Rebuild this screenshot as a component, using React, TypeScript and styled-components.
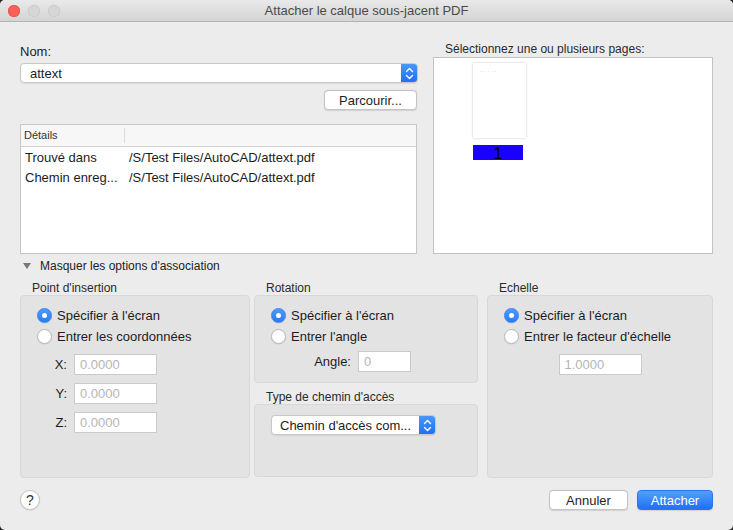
import React from "react";
import styled, { createGlobalStyle } from "styled-components";

const GlobalStyle = createGlobalStyle`
  html, body {
    margin: 0;
    padding: 0;
    background: #262626;
  }
  body {
    font-family: "Liberation Sans", Arial, sans-serif;
    font-size: 13px;
    color: #222;
  }
`;

const Window = styled.div`
  width: 733px;
  height: 530px;
  background: #ececec;
  border-radius: 5px;
  overflow: hidden;
  display: flex;
  flex-direction: column;
`;

const TitleBar = styled.div`
  height: 21px;
  border-bottom: 1px solid #b4b4b4;
  background: linear-gradient(#e9e9e9, #d4d4d4);
  display: grid;
  grid-template-columns: 1fr auto 1fr;
  align-items: center;
`;

const Lights = styled.div`
  display: flex;
  gap: 8px;
  padding-left: 8px;
`;

const Light = styled.span<{ $color: string; $border: string }>`
  width: 12px;
  height: 12px;
  border-radius: 50%;
  background: ${({ $color }) => $color};
  box-shadow: inset 0 0 0 0.5px ${({ $border }) => $border};
`;

const Title = styled.div`
  font-size: 13px;
  color: #4a4a4a;
`;

const Content = styled.div`
  padding: 0 20px;
  display: flex;
  flex-direction: column;
`;

const TopSection = styled.div`
  display: grid;
  grid-template-columns: 398px 1fr;
  column-gap: 15px;
`;

const LeftCol = styled.div`
  display: flex;
  flex-direction: column;
`;

const FieldLabel = styled.div`
  margin-top: 22px;
  line-height: 16px;
  color: #222;
`;

const Combo = styled.div`
  margin-top: 3px;
  height: 20px;
  box-sizing: border-box;
  background: #fff;
  border: 1px solid #c9c9c9;
  border-radius: 4px;
  box-shadow: 0 0.5px 1px rgba(0, 0, 0, 0.08);
  display: flex;
  align-items: center;
  overflow: hidden;
`;

const ComboText = styled.span`
  flex: 1;
  padding-left: 9px;
  color: #1c1c1c;
`;

const Stepper = styled.span`
  width: 17px;
  height: 20px;
  margin: -1px -1px -1px 0;
  background: linear-gradient(#4d98fb, #1c6ff5);
  border-radius: 0 4px 4px 0;
  display: flex;
  align-items: center;
  justify-content: center;
`;

const BrowseRow = styled.div`
  margin-top: 7px;
  display: flex;
  justify-content: flex-end;
  padding-right: 1px;
`;

const Button = styled.button<{ $width: number; $primary?: boolean }>`
  width: ${({ $width }) => $width}px;
  height: 20px;
  box-sizing: border-box;
  padding: 0;
  font-family: inherit;
  font-size: 13px;
  border-radius: 4px;
  border: 1px solid ${({ $primary }) => ($primary ? "#2a76f0" : "#c4c4c4")};
  background: ${({ $primary }) =>
    $primary ? "linear-gradient(#53a0fc, #1f70f5)" : "#fff"};
  color: ${({ $primary }) => ($primary ? "#fff" : "#1e1e1e")};
  box-shadow: 0 0.5px 1px rgba(0, 0, 0, 0.12);
`;

const Table = styled.div`
  margin-top: 14px;
  width: 397px;
  height: 130px;
  box-sizing: border-box;
  background: #fff;
  border: 1px solid #c6c6c6;
  display: flex;
  flex-direction: column;
`;

const TableHeader = styled.div`
  height: 21px;
  border-bottom: 1px solid #d3d3d3;
  background: #f7f7f7;
  display: flex;
  align-items: center;
  font-size: 11px;
  color: #333;
`;

const HeaderCell = styled.div`
  width: 100px;
  padding-left: 3px;
  height: 15px;
  line-height: 15px;
  border-right: 1px solid #dcdcdc;
`;

const TableBody = styled.div`
  padding-top: 1px;
`;

const TableRow = styled.div`
  display: grid;
  grid-template-columns: 104px 1fr;
  height: 19.5px;
  align-items: center;
  color: #1c1c1c;
`;

const Cell = styled.span`
  padding-left: 4px;
  white-space: nowrap;
`;

const RightCol = styled.div`
  display: flex;
  flex-direction: column;
`;

const PagesLabel = styled.div`
  margin-top: 20px;
  line-height: 15px;
  padding-left: 12px;
  font-size: 12px;
  color: #2a2a2a;
`;

const PagesBox = styled.div`
  height: 197px;
  box-sizing: border-box;
  background: #fff;
  border: 1px solid #c3c3c3;
  padding: 5px 0 0 39px;
`;

const PageItem = styled.div`
  display: flex;
  flex-direction: column;
  gap: 7px;
  width: 53px;
`;

const Thumb = styled.div`
  width: 53px;
  height: 75px;
  background: #fff;
  box-shadow: 0 0 2px rgba(0, 0, 0, 0.25);
  box-sizing: border-box;
  padding: 5px 0 0 7px;
  font-size: 6px;
  line-height: 6px;
  color: #b8b8b8;
  letter-spacing: 0.5px;
`;

const PageNumber = styled.div`
  width: 50px;
  height: 15px;
  background: #1a00ff;
  color: #000;
  font-size: 16px;
  line-height: 18px;
  text-align: center;
`;

const Disclosure = styled.div`
  margin-top: 5px;
  height: 14px;
  display: flex;
  align-items: center;
  gap: 9px;
  padding-left: 3px;
  font-size: 12px;
  color: #222;
`;

const Triangle = styled.span`
  width: 0;
  height: 0;
  border-left: 4px solid transparent;
  border-right: 4px solid transparent;
  border-top: 6px solid #777;
`;

const Options = styled.div`
  margin-top: 9px;
  display: grid;
  grid-template-columns: 230px 229px 226px;
  column-gap: 4px;
`;

const Column = styled.div`
  display: flex;
  flex-direction: column;
`;

const GroupTitle = styled.div<{ $gap?: number }>`
  margin-top: ${({ $gap }) => $gap ?? 0}px;
  padding-left: 12px;
  font-size: 12px;
  line-height: 13px;
  color: #2a2a2a;
`;

const GroupBox = styled.div<{ $height: number; $width?: number }>`
  height: ${({ $height }) => $height}px;
  width: ${({ $width }) => ($width ? `${$width}px` : "auto")};
  box-sizing: border-box;
  background: #e3e3e3;
  border: 1px solid #d8d8d8;
  border-radius: 4px;
  padding: 9px 16px 0;
  display: flex;
  flex-direction: column;
`;

const RadioRow = styled.label`
  height: 21px;
  display: flex;
  align-items: center;
  gap: 5px;
  color: #1c1c1c;
`;

const Radio = styled.span<{ $checked?: boolean }>`
  width: 15px;
  height: 15px;
  box-sizing: border-box;
  border-radius: 50%;
  background: ${({ $checked }) =>
    $checked ? "linear-gradient(#4f9bfb, #2a7af6)" : "#fff"};
  border: 1px solid ${({ $checked }) => ($checked ? "#3a83f3" : "#b8b8b8")};
  box-shadow: 0 0.5px 1px rgba(0, 0, 0, 0.1);
  display: flex;
  align-items: center;
  justify-content: center;
  &::after {
    content: "";
    width: 5px;
    height: 5px;
    border-radius: 50%;
    background: ${({ $checked }) => ($checked ? "#fff" : "transparent")};
  }
`;

const CoordGrid = styled.div`
  margin: 7px 0 0 10px;
  display: grid;
  grid-template-columns: 20px 83px;
  column-gap: 7px;
  row-gap: 8px;
  align-items: center;
`;

const InlineLabel = styled.span<{ $width?: number }>`
  width: ${({ $width }) => ($width ? `${$width}px` : "auto")};
  text-align: right;
  color: #1c1c1c;
`;

const NumberField = styled.div<{ $width: number }>`
  width: ${({ $width }) => $width}px;
  height: 21px;
  box-sizing: border-box;
  background: #fff;
  border: 1px solid #cacaca;
  padding-left: 5px;
  line-height: 19px;
  color: #b5b5b5;
`;

const AngleRow = styled.div`
  margin: 4px 0 0 42px;
  display: flex;
  align-items: center;
  gap: 7px;
`;

const ScaleRow = styled.div`
  margin-top: 7px;
  display: flex;
  justify-content: center;
`;

const SelectBox = styled.div`
  margin-top: 1px;
  width: 165px;
  height: 20px;
  box-sizing: border-box;
  background: #fff;
  border: 1px solid #c9c9c9;
  border-radius: 4px;
  box-shadow: 0 0.5px 1px rgba(0, 0, 0, 0.08);
  display: flex;
  align-items: center;
  overflow: hidden;
`;

const SelectText = styled.span`
  flex: 1;
  padding-left: 8px;
  white-space: nowrap;
  color: #1c1c1c;
`;

const Footer = styled.div`
  margin-top: 12px;
  display: flex;
  justify-content: space-between;
  align-items: center;
`;

const HelpButton = styled.button`
  width: 20px;
  height: 20px;
  padding: 0;
  border-radius: 50%;
  border: 1px solid #c6c6c6;
  background: #fff;
  box-shadow: 0 0.5px 1px rgba(0, 0, 0, 0.15);
  font-family: inherit;
  font-size: 14px;
  color: #333;
  line-height: 18px;
`;

const Actions = styled.div`
  display: flex;
  gap: 9px;
`;

const StepperIcon = () => (
  <svg width="9" height="13" viewBox="0 0 9 13" fill="none">
    <path d="M1.5 4.5 L4.5 1.5 L7.5 4.5" stroke="#fff" strokeWidth="1.4" strokeLinecap="round" strokeLinejoin="round" />
    <path d="M1.5 8.5 L4.5 11.5 L7.5 8.5" stroke="#fff" strokeWidth="1.4" strokeLinecap="round" strokeLinejoin="round" />
  </svg>
);

const details = [
  { key: "Trouvé dans", value: "/S/Test Files/AutoCAD/attext.pdf" },
  { key: "Chemin enreg...", value: "/S/Test Files/AutoCAD/attext.pdf" },
];

const App = () => {
  return (
    <>
      <GlobalStyle />
      <Window>
        <TitleBar>
          <Lights>
            <Light $color="#fc5f57" $border="#e0443e" />
            <Light $color="#d6d6d6" $border="#c2c2c2" />
            <Light $color="#d6d6d6" $border="#c2c2c2" />
          </Lights>
          <Title>Attacher le calque sous-jacent PDF</Title>
          <span />
        </TitleBar>
        <Content>
          <TopSection>
            <LeftCol>
              <FieldLabel>Nom:</FieldLabel>
              <Combo>
                <ComboText>attext</ComboText>
                <Stepper>
                  <StepperIcon />
                </Stepper>
              </Combo>
              <BrowseRow>
                <Button $width={93}>Parcourir...</Button>
              </BrowseRow>
              <Table>
                <TableHeader>
                  <HeaderCell>Détails</HeaderCell>
                </TableHeader>
                <TableBody>
                  {details.map((d) => (
                    <TableRow key={d.key}>
                      <Cell>{d.key}</Cell>
                      <Cell>{d.value}</Cell>
                    </TableRow>
                  ))}
                </TableBody>
              </Table>
            </LeftCol>
            <RightCol>
              <PagesLabel>Sélectionnez une ou plusieurs pages:</PagesLabel>
              <PagesBox>
                <PageItem>
                  <Thumb>·· · ··</Thumb>
                  <PageNumber>1</PageNumber>
                </PageItem>
              </PagesBox>
            </RightCol>
          </TopSection>

          <Disclosure>
            <Triangle />
            Masquer les options d'association
          </Disclosure>

          <Options>
            <Column>
              <GroupTitle>Point d'insertion</GroupTitle>
              <GroupBox $height={183}>
                <RadioRow>
                  <Radio $checked />
                  Spécifier à l'écran
                </RadioRow>
                <RadioRow>
                  <Radio />
                  Entrer les coordonnées
                </RadioRow>
                <CoordGrid>
                  <InlineLabel>X:</InlineLabel>
                  <NumberField $width={83}>0.0000</NumberField>
                  <InlineLabel>Y:</InlineLabel>
                  <NumberField $width={83}>0.0000</NumberField>
                  <InlineLabel>Z:</InlineLabel>
                  <NumberField $width={83}>0.0000</NumberField>
                </CoordGrid>
              </GroupBox>
            </Column>

            <Column>
              <GroupTitle>Rotation</GroupTitle>
              <GroupBox $height={88} $width={224}>
                <RadioRow>
                  <Radio $checked />
                  Spécifier à l'écran
                </RadioRow>
                <RadioRow>
                  <Radio />
                  Entrer l'angle
                </RadioRow>
                <AngleRow>
                  <InlineLabel $width={38}>Angle:</InlineLabel>
                  <NumberField $width={53}>0</NumberField>
                </AngleRow>
              </GroupBox>
              <GroupTitle $gap={8}>Type de chemin d'accès</GroupTitle>
              <GroupBox $height={73} $width={224}>
                <SelectBox>
                  <SelectText>Chemin d'accès com...</SelectText>
                  <Stepper>
                    <StepperIcon />
                  </Stepper>
                </SelectBox>
              </GroupBox>
            </Column>

            <Column>
              <GroupTitle>Echelle</GroupTitle>
              <GroupBox $height={183}>
                <RadioRow>
                  <Radio $checked />
                  Spécifier à l'écran
                </RadioRow>
                <RadioRow>
                  <Radio />
                  Entrer le facteur d'échelle
                </RadioRow>
                <ScaleRow>
                  <NumberField $width={83}>1.0000</NumberField>
                </ScaleRow>
              </GroupBox>
            </Column>
          </Options>

          <Footer>
            <HelpButton>?</HelpButton>
            <Actions>
              <Button $width={79}>Annuler</Button>
              <Button $width={76} $primary>
                Attacher
              </Button>
            </Actions>
          </Footer>
        </Content>
      </Window>
    </>
  );
};

export default App;
